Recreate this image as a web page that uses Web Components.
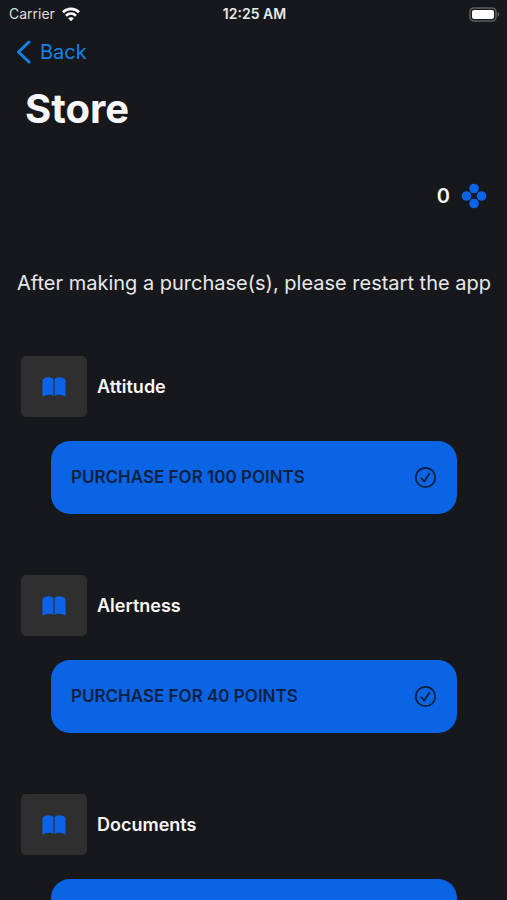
<!DOCTYPE html>
<html lang="en">
<head>
<meta charset="utf-8">
<meta name="viewport" content="width=device-width, initial-scale=1">
<title>Store</title>
<style>
  html { background: #17181b; }
  body { margin: 0; color: #f7f7f8; font-family: Inter, "Liberation Sans", sans-serif; }
</style>
</head>
<body>
<store-screen></store-screen>
<script>
const define = (name, html, setup) => {
  const template = document.createElement('template');
  template.innerHTML = html;
  customElements.define(name, class extends HTMLElement {
    constructor() {
      super();
      this.attachShadow({ mode: 'open' }).append(template.content.cloneNode(true));
      if (setup) setup(this);
    }
  });
};

define('status-bar', `
<style>
  :host { display: grid; grid-template-columns: 1fr auto 1fr; align-items: center; height: 28px; padding: 0 7px 0 9px; font-size: 14px; line-height: 20px; }
  .network { display: flex; align-items: center; gap: 7px; color: #dededf; }
  .time { font-weight: 600; color: #e8e8e9; }
  .battery { justify-self: end; }
  svg { display: block; }
</style>
<div class="network"><span>Carrier</span>
  <svg width="18" height="15" viewBox="0 0 18 15" fill="none" stroke="#fff" stroke-width="2.600" aria-hidden="true">
    <path d="M1 5.200C5.500.8 12.500.8 17 5.200"/><path d="M4 8.700C6.900 5.900 11.100 5.900 14 8.700"/><path d="M6.200 11.200C7.800 9.800 10.200 9.800 11.800 11.200L9 14.200Z" fill="#fff" stroke="none"/>
  </svg>
</div>
<span class="time">12:25 AM</span>
<svg class="battery" width="31" height="15" viewBox="0 0 31 15" aria-hidden="true">
  <rect x="1" y="1" width="26" height="13" rx="4" fill="none" stroke="#5d5e60" stroke-width="1.600"/>
  <rect x="3" y="3" width="22" height="9" rx="2" fill="#fff"/>
  <path d="M28.700 5C30.800 5.800 30.800 9.200 28.700 10Z" fill="#5d5e60"/>
</svg>`);

define('back-link', `
<style>
  :host { display: block; padding: 10px 16px 0; }
  a { display: inline-flex; align-items: center; gap: 8px; color: #1483e8; font-size: 20px; line-height: 28px; text-decoration: none; }
  svg { display: block; }
</style>
<a href="#"><svg width="16" height="24" viewBox="0 0 16 24" fill="none" stroke="currentColor" stroke-width="3" stroke-linecap="round" stroke-linejoin="round" aria-hidden="true"><path d="M13 2L2.500 12L13 22"/></svg><slot></slot></a>`);

define('points-balance', `
<style>
  :host { display: flex; align-items: center; justify-content: flex-end; gap: 11px; font-size: 20px; font-weight: 600; line-height: 28px; }
  svg { display: block; }
</style>
<slot></slot>
<svg width="26" height="26" viewBox="0 0 26 26" fill="#0b64e8" aria-hidden="true"><circle cx="13" cy="5.500" r="4.800"/><circle cx="5.500" cy="13" r="4.800"/><circle cx="20.500" cy="13" r="4.800"/><circle cx="13" cy="20.500" r="4.800"/></svg>`);

define('purchase-button', `
<style>
  :host { display: block; }
  button { display: flex; align-items: center; justify-content: space-between; width: 100%; min-height: 73px; padding: 24px 20px; border: 0; border-radius: 19px; background: #0b64e3; color: #0e2142; font: inherit; font-size: 17px; font-weight: 600; line-height: 25px; text-align: left; cursor: pointer; }
  svg { display: block; }
</style>
<button type="button" aria-label="Purchase"><span><slot></slot></span>
<svg width="23" height="23" viewBox="0 0 23 23" fill="none" stroke="currentColor" stroke-width="1.800" stroke-linecap="round" stroke-linejoin="round" aria-hidden="true"><circle cx="11.500" cy="11.500" r="9.700"/><path d="M7.300 12.200L10.300 15.600L15.400 7.600"/></svg></button>`);

define('store-item', `
<style>
  :host { display: flex; flex-direction: column; gap: 24px; }
  .heading { display: flex; align-items: center; gap: 10px; }
  .tile { display: grid; place-items: center; width: 66px; height: 61px; border-radius: 5px; background: #2f2f30; }
  h2 { margin: 0; font-size: 18px; font-weight: 600; line-height: 24px; }
  purchase-button { margin: 0 30px; }
  svg { display: block; }
</style>
<div class="heading"><div class="tile">
<svg width="24" height="20" viewBox="0 0 24 20" fill="#0b64e8" aria-hidden="true"><path d="M.5 3C2.500-.3 9-.4 11.400 2.200V19C9 17.100 4 17 .5 19.800ZM12.600 2.200C15-.4 21.500-.3 23.500 3V19.800C20 17 15 17.100 12.600 19Z"/></svg>
</div><h2><slot></slot></h2></div>
<purchase-button></purchase-button>`, host => {
  const price = host.getAttribute('price');
  if (price) host.shadowRoot.querySelector('purchase-button').textContent = 'PURCHASE FOR ' + price + ' POINTS';
});

define('store-screen', `
<style>
  :host { display: block; height: 100dvh; overflow: hidden auto; scrollbar-width: none; }
  h1 { margin: 0; padding: 16px 25px 0; font-size: 40px; font-weight: 700; line-height: 50px; }
  main { padding: 0 20px 60px 21px; }
  points-balance { padding-top: 48px; }
  p { margin: 59px -12px; font-size: 20px; line-height: 28px; color: #e8e8e9; text-align: center; }
  .items { display: grid; gap: 61px; }
</style>
<status-bar></status-bar>
<nav><back-link>Back</back-link></nav>
<h1>Store</h1>
<main>
  <points-balance>0</points-balance>
  <p>After making a purchase(s), please restart the app</p>
  <div class="items">
    <store-item price="100">Attitude</store-item>
    <store-item price="40">Alertness</store-item>
    <store-item>Documents</store-item>
  </div>
</main>`);
</script>
</body>
</html>
